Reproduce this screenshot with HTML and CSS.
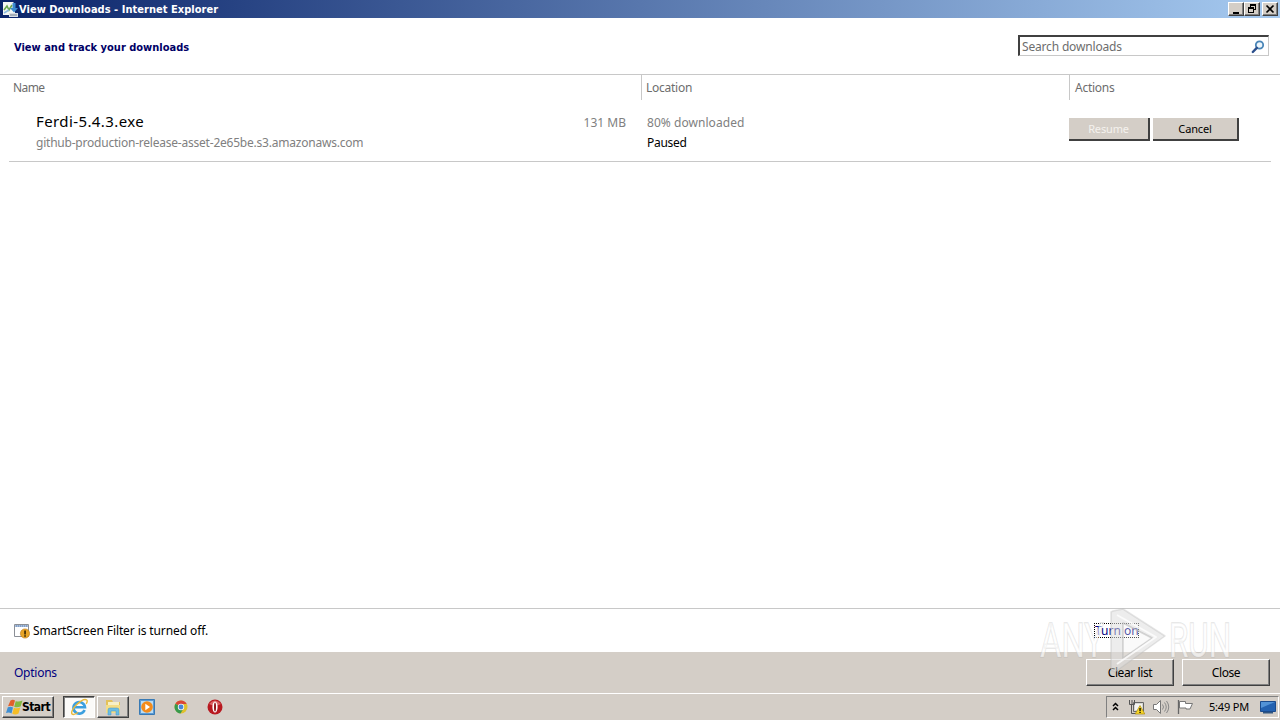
FILE: index.html
```html
<!DOCTYPE html>
<html lang="en">

<head>
  <meta charset="UTF-8" />
  <meta name="viewport" content="width=device-width, initial-scale=1.0">
  <title>View Downloads - Internet Explorer</title>
  <link rel="stylesheet" href="styles.css">
</head>

<body>
  <header class="titlebar">
    <svg class="app-icon" viewBox="0 0 17 17">
      <path d="M1 1h10l2 2v11H1z" fill="#f4f7f3" />
      <path d="M2 9l3-4 2 4 3-5" fill="none" stroke="#6aa84f" stroke-width="1.600" />
      <path d="M2 12l5-3" stroke="#8abbe0" stroke-width="1.500" />
      <path d="M10.500 2h3v5h2.500l-4 4.500L8 7h2.500z" fill="#3a8bd0" />
      <path d="M7 12h9v4H7z" fill="#d9dde3" />
      <path d="M8 14h7" stroke="#75808d" />
    </svg>
    <h1>View Downloads - Internet Explorer</h1>
    <div class="window-buttons">
      <button class="win-btn" aria-label="Minimize"><svg viewBox="0 0 12 10"><path d="M3 8h6v2H3z" /></svg></button>
      <button class="win-btn" aria-label="Restore"><svg viewBox="0 0 12 10"><path d="M4 0h6v6H8V5h1V2H5v1H4zM2 3h6v6H2zm1 2v3h4V5z" fill-rule="evenodd" /></svg></button>
      <button class="win-btn close-x" aria-label="Close window"><svg viewBox="0 0 12 10"><path d="M2.500 1.500l7 7m0-7l-7 7" fill="none" stroke="#000" stroke-width="1.700" /></svg></button>
    </div>
  </header>

  <section class="heading">
    <h2>View and track your downloads</h2>
    <div class="search">
      <span>Search downloads</span>
      <svg viewBox="0 0 14 14">
        <circle cx="8.500" cy="5" r="3.700" fill="#eef6fc" stroke="#4a86b8" stroke-width="1.800" />
        <path d="M5.800 7.800L1.800 12" stroke="#2c4f8c" stroke-width="2.400" stroke-linecap="round" />
      </svg>
    </div>
  </section>

  <main class="downloads">
    <div class="columns">
      <div class="col-name"><span>Name</span></div>
      <div class="col-location">Location</div>
      <div class="col-actions">Actions</div>
    </div>
    <div class="item">
      <div class="file">
        <p class="file-name">Ferdi-5.4.3.exe</p>
        <p class="file-host">github-production-release-asset-2e65be.s3.amazonaws.com</p>
      </div>
      <div class="size">131 MB</div>
      <div class="status">
        <p class="progress">80% downloaded</p>
        <p class="state">Paused</p>
      </div>
      <div class="actions">
        <button class="btn resume" disabled>Resume</button>
        <button class="btn cancel">Cancel</button>
      </div>
    </div>
  </main>

  <section class="smartscreen">
    <svg class="filter-icon" viewBox="0 0 16 16">
      <path d="M.5 1.500h14v12H.5z" fill="#fff" stroke="#8b8f96" />
      <path d="M1 2h13v2H1z" fill="#a9bfdc" />
      <path d="M2 3h11" stroke="#5f7fae" stroke-dasharray="1 1" />
      <circle cx="11" cy="10.500" r="4.600" fill="#e9a527" stroke="#b87514" stroke-width=".6" />
      <path d="M10.200 7.500h1.700v4h-1.700zM10.200 12.200h1.700v1.500h-1.700z" fill="#3d2b07" />
    </svg>
    <span class="filter-text">SmartScreen Filter is turned off.</span>
    <a class="turn-on">Turn on</a>
  </section>

  <footer class="options-bar">
    <a class="options">Options</a>
    <button class="btn raised clear-list">Clear list</button>
    <button class="btn raised close">Close</button>
  </footer>

  <nav class="taskbar">
    <button class="task-btn start">
      <svg viewBox="0 0 17 16">
        <path d="M4.500 1.500Q7 0 9 1.500L7.300 7.500Q5 6 2 7.200z" fill="#e2602b" />
        <path d="M9.800 1.900Q12 3.500 16.500 1.500L14.600 7.600Q11 9 8.200 7.800z" fill="#83b940" />
        <path d="M1.800 8.200Q4.500 7 7 8.400L5.500 14.500Q3 12.800 0 14z" fill="#3f8fd2" />
        <path d="M7.900 8.700Q11 10 14.300 8.600L12.500 14.500Q9.500 16.500 6.300 14.800z" fill="#f5bd26" />
      </svg>
      <span>Start</span>
    </button>
    <button class="task-btn ie" aria-label="Internet Explorer">
      <svg viewBox="0 0 18 18">
        <path d="M14.600 12A5.800 5.800 0 1 1 15 9.300H5" fill="none" stroke="#3b9fdf" stroke-width="2.600" />
        <path d="M2.300 16.200C-1.500 13 12.500-.8 16.700 2c1 .8.300 2.500-.5 3.800M2.300 16.200c1.200.8 3.700-.4 5.700-1.700" fill="none" stroke="#e8b93b" stroke-width="1.400" />
      </svg>
    </button>
    <button class="task-btn explorer" aria-label="Windows Explorer">
      <svg viewBox="0 0 18 18">
        <path d="M2 2h6l1 2h7v11H2z" fill="#e3c159" />
        <path d="M4 4h11v4H4z" fill="#f7f0c5" />
        <path d="M2 7h14v8H2z" fill="#f3dd86" />
        <path d="M4 17v-5q0-2 2-2h7q2 0 2 2v5h-3v-4H7v4z" fill="#6bbde2" stroke="#4297c6" stroke-width=".5" />
      </svg>
    </button>
    <svg class="launch" viewBox="0 0 16 16">
      <path d="M.5.5h15v15H.5z" fill="#5b9bd5" stroke="#397ab4" />
      <path d="M2 2h12v12H2z" fill="#b9dcf4" />
      <circle cx="8" cy="8" r="5.800" fill="#f38b1b" />
      <path d="M6.300 4.800L11 8l-4.700 3.200z" fill="#fff" />
    </svg>
    <svg class="launch" viewBox="0 0 16 16">
      <circle cx="8" cy="8" r="6.500" fill="#e0c12d" />
      <path d="M8 8L2.400 4.700A6.500 6.500 0 0 1 13.700 5H8z" fill="#da4637" />
      <path d="M8 8L2.400 4.700A6.500 6.500 0 0 0 7.500 14.500L10.500 9.500z" fill="#38994d" />
      <circle cx="8" cy="8" r="3.200" fill="#f5f5f5" />
      <circle cx="8" cy="8" r="2.400" fill="#4786d8" />
    </svg>
    <svg class="launch" viewBox="0 0 16 16">
      <circle cx="8" cy="8" r="7.500" fill="#b81920" />
      <path d="M2 5Q8-2 14 5Q8 8 2 5z" fill="#db6365" />
      <ellipse cx="8" cy="8" rx="2.600" ry="5.600" fill="#fff" />
      <ellipse cx="8" cy="8" rx="1" ry="4.500" fill="#8f1519" />
    </svg>

    <div class="tray">
      <svg class="chevrons" viewBox="0 0 8 10"><path d="M1 4l2.500-2.500L6 4M1 8l2.500-2.500L6 8" fill="none" stroke="#000" stroke-width="1.500" /></svg>
      <svg class="network" viewBox="0 0 16 16">
        <path d="M4.500 3.500h10v9h-10z" fill="#d8d8d4" stroke="#666" />
        <path d="M6 5h7v6H6z" fill="#f5f5f2" />
        <path d="M.5 1v4.500h5V1M3 1v4M2.500 5v9.500h5" fill="none" stroke="#555" />
        <path d="M11 6.500l4.800 8.500H6.200z" fill="#f7d526" stroke="#a98b13" stroke-width=".7" />
        <path d="M10.400 9h1.300v3h-1.300zM10.400 12.800h1.300V14h-1.300z" />
      </svg>
      <svg class="volume" viewBox="0 0 17 16">
        <path d="M.5 5.500h3l4-4v13l-4-4h-3z" fill="#fff" stroke="#777" />
        <path d="M9.500 5.500q2 2.500 0 5M11.500 3.500q3.500 4.500 0 9M13.500 2q4.500 6 0 12" fill="none" stroke="#888" />
      </svg>
      <svg class="flag" viewBox="0 0 17 16">
        <path d="M1.500 1v14" stroke="#666" stroke-width="1.300" />
        <path d="M2.500 2.500h6v2h7l-2.500 5.500h-4v-1H2.500z" fill="#fff" stroke="#777" />
      </svg>
      <span class="clock">5:49 PM</span>
      <svg class="desktop" viewBox="0 0 16 14">
        <path d="M.5 1.500h15v10H.5z" fill="#2462b0" stroke="#1b4b8c" />
        <path d="M1 2h14L1 8z" fill="#5393d6" />
        <path d="M3 12h10v1.500H3z" fill="#315680" />
      </svg>
    </div>
  </nav>

  <!-- Watermark over the bottom right corner -->
  <svg class="watermark" viewBox="0 0 200 68">
    <g stroke="#b4b4b4" stroke-opacity=".35" stroke-width="1.500" stroke-linejoin="round">
      <path d="M76 3l10-2 42 27-50 36-4-2V4zM86 15v35l29-20z" fill="#dedede" fill-opacity=".55" fill-rule="evenodd" />
      <path d="M86 15l29 15-29 20z" fill="#f2f2f2" fill-opacity=".35" />
      <path d="M80 7l39 22-39 27" fill="none" stroke="#fff" stroke-opacity=".75" stroke-width="2" />
    </g>
    <g class="mark-text">
      <text x="3" y="49" textLength="64" lengthAdjust="spacingAndGlyphs">ANY</text>
      <text x="132" y="49" textLength="62" lengthAdjust="spacingAndGlyphs">RUN</text>
    </g>
  </svg>
</body>

</html>
```
FILE: styles.css
```css
* {
  box-sizing: border-box;
  margin: 0;
  padding: 0;
}

body {
  width: 1280px;
  height: 720px;
  overflow: hidden;
  display: flex;
  flex-direction: column;
  position: relative;
  background: #fff;
  color: #000;
  font-family: "Noto Sans", "Open Sans", sans-serif;
  font-size: 12px;
  line-height: 16px;
  white-space: nowrap;
}

svg {
  display: block;
  flex: none;
}

button {
  font: inherit;
  color: #000;
  background: #d4cec7;
  border: none;
}

/* Title bar */
.titlebar {
  height: 18px;
  display: flex;
  align-items: center;
  background: linear-gradient(90deg, #0a246a, #a6caf0);
  padding: 0 2px;
}

.app-icon {
  width: 17px;
  height: 17px;
}

.titlebar h1 {
  flex: 1;
  padding-top: 1px;
  color: #fff;
  font: bold 11px/16px "DejaVu Sans Condensed", "DejaVu Sans", sans-serif;
  font-stretch: condensed;
  letter-spacing: 0.03px;
}

.window-buttons {
  display: flex;
}

.win-btn {
  width: 16px;
  height: 14px;
  padding: 1px;
  border: 1px solid;
  border-color: #fff #404040 #404040 #fff;
  box-shadow: inset -1px -1px #808080;
}

.win-btn svg {
  width: 12px;
  height: 10px;
}

.close-x {
  margin-left: 2px;
}

/* Heading and search */
.heading {
  height: 56px;
  display: flex;
  justify-content: space-between;
  padding: 17px 11px 0 14px;
}

.heading h2 {
  padding-top: 1px;
  color: #000066;
  font: bold 11px/24px "DejaVu Sans Condensed", "DejaVu Sans", sans-serif;
  font-stretch: condensed;
}

.search {
  width: 251px;
  height: 21px;
  display: flex;
  align-items: center;
  justify-content: space-between;
  padding: 1px 3px 0 2px;
  border: 1px solid #c8c8c8;
  border-top: 2px solid #404040;
  border-left: 2px solid #404040;
  color: #6d6d6d;
  letter-spacing: -0.17px;
}

.search svg {
  width: 14px;
  height: 14px;
}

/* Download list */
.downloads {
  flex: 1;
  border-top: 1px solid #c8c8c8;
}

.columns {
  height: 25px;
  display: flex;
  color: #6d6d6d;
  line-height: 25px;
  letter-spacing: -0.25px;
}

.col-name {
  width: 641px;
  padding-left: 13px;
  letter-spacing: -0.6px;
}

.col-location {
  width: 428px;
  padding-left: 4px;
  border-left: 1px solid #c8c8c8;
}

.col-actions {
  padding-left: 5px;
  border-left: 1px solid #c8c8c8;
}

.item {
  height: 62px;
  display: flex;
  margin: 0 9px;
  padding-top: 11px;
  border-bottom: 1px solid #c8c8c8;
  line-height: 20px;
}

.file {
  width: 540px;
  padding-left: 27px;
}

.file-name {
  font-size: 15px;
  letter-spacing: 0.4px;
}

.file-host,
.size,
.progress {
  color: #808080;
}

.file-host {
  padding-top: 2px;
  letter-spacing: -0.22px;
}

.size {
  width: 77px;
  padding-top: 2px;
  text-align: right;
}

.status {
  width: 443px;
  padding: 2px 0 0 21px;
}

.progress {
  letter-spacing: 0.05px;
}

.state {
  letter-spacing: -0.3px;
}

.actions {
  display: flex;
  gap: 3px;
  padding-top: 7px;
}

.btn {
  height: 23px;
  padding-top: 1px;
  border-right: 2px solid #404040;
  border-bottom: 2px solid #404040;
  font-size: 11px;
  line-height: 20px;
  letter-spacing: -0.15px;
}

.resume {
  width: 81px;
  color: #f4f2ee;
}

.cancel {
  width: 86px;
}

/* SmartScreen notice */
.smartscreen {
  height: 44px;
  display: flex;
  align-items: center;
  padding-left: 14px;
  border-top: 1px solid #c8c8c8;
}

.filter-icon {
  width: 16px;
  height: 16px;
  margin-right: 3px;
}

.filter-text {
  width: 1061px;
  letter-spacing: -0.1px;
}

.turn-on {
  width: 45px;
  height: 15px;
  border: 1px dotted #000;
  color: #000080;
  line-height: 13px;
}

/* Options row */
.options-bar {
  height: 41px;
  display: flex;
  align-items: center;
  gap: 8px;
  padding: 0 10px 0 14px;
  background: #d4cec7;
}

.options {
  flex: 1;
  color: #000080;
  letter-spacing: -0.25px;
}

.raised {
  width: 88px;
  height: 27px;
  padding-top: 0;
  border: 1px solid;
  border-color: #fff #404040 #404040 #fff;
  box-shadow: inset -1px -1px #808080;
  font-size: 12px;
  letter-spacing: -0.4px;
}

/* Taskbar */
.taskbar {
  height: 27px;
  display: flex;
  align-items: center;
  padding: 0 1px 0 2px;
  background: #d4cec7;
  border-top: 1px solid #fff;
}

.task-btn {
  height: 22px;
  display: flex;
  align-items: center;
  justify-content: center;
  border: 1px solid;
  border-color: #fff #404040 #404040 #fff;
  box-shadow: inset -1px -1px #808080;
}

.start {
  width: 52px;
  margin-right: 9px;
  font: bold 12px/16px "DejaVu Sans Condensed", "DejaVu Sans", sans-serif;
  font-stretch: condensed;
  letter-spacing: -0.5px;
}

.start svg {
  width: 17px;
  height: 16px;
  margin-right: -1px;
}

.ie {
  width: 32px;
  margin-right: 2px;
  background: #fbfaf8;
  border-color: #404040 #fff #fff #404040;
  box-shadow: inset 1px 1px #808080;
}

.explorer {
  width: 32px;
  margin-right: 10px;
}

.ie svg,
.explorer svg {
  width: 18px;
  height: 18px;
}

.launch {
  width: 16px;
  height: 16px;
  margin-right: 18px;
}

.tray {
  width: 173px;
  height: 22px;
  display: flex;
  align-items: center;
  margin-left: auto;
  padding-left: 5px;
  border: 1px solid;
  border-color: #808080 #fff #fff #808080;
}

.chevrons {
  width: 8px;
  height: 10px;
  margin-right: 9px;
}

.network {
  width: 16px;
  height: 16px;
  margin-right: 8px;
}

.volume {
  width: 17px;
  height: 16px;
  margin-right: 7px;
}

.flag {
  width: 17px;
  height: 16px;
}

.clock {
  width: 51px;
  margin-left: 15px;
  font-size: 11px;
  letter-spacing: -0.2px;
}

.desktop {
  width: 16px;
  height: 14px;
}

.watermark {
  position: absolute;
  left: 1037px;
  top: 608px;
  width: 200px;
  height: 68px;
}

.mark-text {
  fill: #fff;
  fill-opacity: 0.6;
  stroke: #b0b0b0;
  stroke-opacity: 0.35;
  stroke-width: 1.5px;
  paint-order: stroke;
  font-family: Roboto, sans-serif;
  font-size: 48px;
}
```
